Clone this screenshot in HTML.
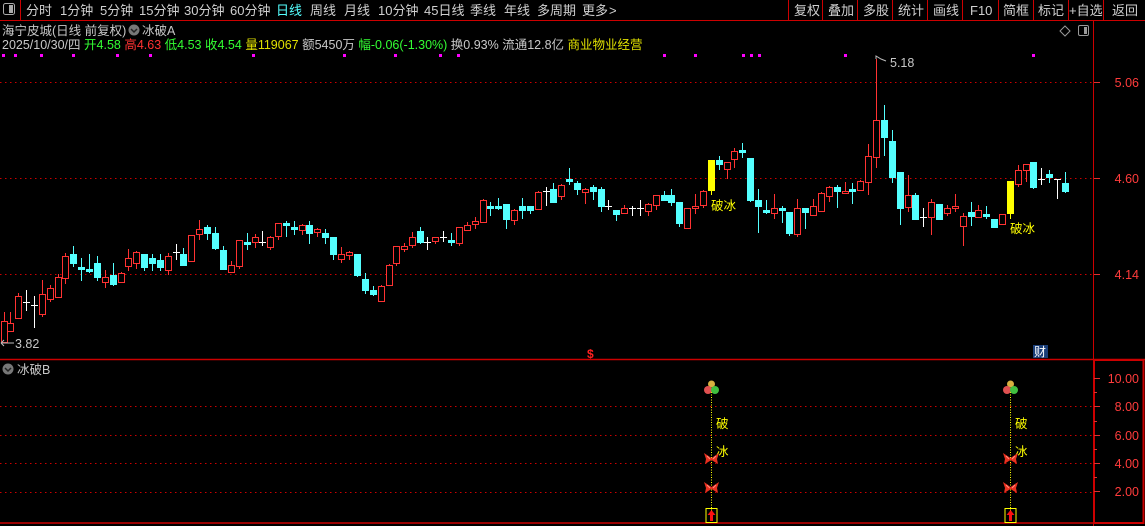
<!DOCTYPE html>
<html><head><meta charset="utf-8"><style>
html,body{margin:0;padding:0;background:#000;width:1145px;height:526px;overflow:hidden}
svg{display:block}
text{font-family:"Liberation Sans","Noto Sans CJK SC",sans-serif}
</style></head><body>
<svg id="s" width="1145" height="526" viewBox="0 0 1145 526" xmlns="http://www.w3.org/2000/svg">
<rect width="1145" height="526" fill="#000"/>
<rect x="3.5" y="3.5" width="11" height="11" rx="2" fill="none" stroke="#aaa"/>
<rect x="9" y="5" width="4" height="8" fill="#aaa"/>
<line x1="20.5" y1="0" x2="20.5" y2="20" stroke="#c00"/>
<g font-size="13" fill="#d0d0d0">
<text x="26" y="15">分时</text><text x="60" y="15">1分钟</text><text x="100" y="15">5分钟</text><text x="139" y="15">15分钟</text><text x="184" y="15">30分钟</text><text x="230" y="15">60分钟</text>
<text x="276" y="15" fill="#54ffff">日线</text><text x="310" y="15">周线</text><text x="344" y="15">月线</text><text x="378" y="15">10分钟</text><text x="424" y="15">45日线</text><text x="470" y="15">季线</text><text x="504" y="15">年线</text><text x="537" y="15">多周期</text><text x="582" y="15">更多</text><text x="609" y="15">&gt;</text>
<text x="794" y="15">复权</text><text x="828" y="15">叠加</text><text x="863" y="15">多股</text><text x="898" y="15">统计</text><text x="933" y="15">画线</text><text x="970" y="15">F10</text><text x="1003" y="15">简框</text><text x="1038" y="15">标记</text><text x="1069" y="15">+自选</text><text x="1112" y="15">返回</text>
</g>
<g stroke="#c00"><line x1="788.5" y1="0" x2="788.5" y2="20"/><line x1="822.5" y1="0" x2="822.5" y2="20"/><line x1="857.5" y1="0" x2="857.5" y2="20"/><line x1="892.5" y1="0" x2="892.5" y2="20"/><line x1="927.5" y1="0" x2="927.5" y2="20"/><line x1="962.5" y1="0" x2="962.5" y2="20"/><line x1="998.5" y1="0" x2="998.5" y2="20"/><line x1="1033.5" y1="0" x2="1033.5" y2="20"/><line x1="1068.5" y1="0" x2="1068.5" y2="20"/><line x1="1103.5" y1="0" x2="1103.5" y2="20"/></g>
<line x1="0" y1="20.5" x2="1145" y2="20.5" stroke="#c00"/>
<text x="2" y="35" font-size="12.5" fill="#c8c8c8">海宁皮城(日线 前复权)</text>
<circle cx="134" cy="30" r="5.5" fill="#777"/><path d="M131 29 l3 3 l3 -3" stroke="#222" fill="none" stroke-width="1.5"/>
<text x="142" y="35" font-size="12.5" fill="#c8c8c8">冰破A</text>
<text x="2" y="49" font-size="12.5" fill="#c8c8c8">2025/10/30/四 <tspan fill="#33ff33">开4.58</tspan> <tspan fill="#ff3232">高4.63</tspan> <tspan fill="#33ff33">低4.53</tspan> <tspan fill="#33ff33">收4.54</tspan> <tspan fill="#e0e000">量119067</tspan> 额5450万 <tspan fill="#33ff33">幅-0.06(-1.30%)</tspan> 换0.93% 流通12.8亿 <tspan fill="#e0e000">商业物业经营</tspan></text>
<path d="M1065 26 l5 5 l-5 5 l-5 -5z" fill="none" stroke="#999"/>
<rect x="1078.5" y="25.5" width="10" height="10" rx="1.5" fill="none" stroke="#999"/><rect x="1084" y="27" width="3" height="7" fill="#999"/>
<line x1="1093.5" y1="21" x2="1093.5" y2="526" stroke="#c00"/>
<line x1="0" y1="359.5" x2="1145" y2="359.5" stroke="#c00" stroke-width="1.5"/>
<rect x="1094" y="360" width="49.5" height="163" fill="none" stroke="#c00" stroke-width="2"/>
<line x1="0" y1="523" x2="1094" y2="523" stroke="#c00" stroke-width="1.5"/>
<g stroke="#c00" stroke-dasharray="1.5,3.5">
<line x1="0" y1="82.5" x2="1093" y2="82.5"/><line x1="0" y1="178.5" x2="1093" y2="178.5"/><line x1="0" y1="274.5" x2="1093" y2="274.5"/>
<line x1="0" y1="406.5" x2="1093" y2="406.5"/><line x1="0" y1="435.5" x2="1093" y2="435.5"/><line x1="0" y1="463.5" x2="1093" y2="463.5"/><line x1="0" y1="492.5" x2="1093" y2="492.5"/>
</g>
<g stroke="#e03030"><line x1="1094" y1="82.5" x2="1100" y2="82.5"/><line x1="1094" y1="178.5" x2="1100" y2="178.5"/><line x1="1094" y1="274.5" x2="1100" y2="274.5"/>
<line x1="1094" y1="378.5" x2="1100" y2="378.5"/><line x1="1094" y1="406.5" x2="1100" y2="406.5"/><line x1="1094" y1="435.5" x2="1100" y2="435.5"/><line x1="1094" y1="463.5" x2="1100" y2="463.5"/><line x1="1094" y1="491.5" x2="1100" y2="491.5"/>
<line x1="1094" y1="392.5" x2="1097" y2="392.5"/><line x1="1094" y1="421.5" x2="1097" y2="421.5"/><line x1="1094" y1="449.5" x2="1097" y2="449.5"/><line x1="1094" y1="477.5" x2="1097" y2="477.5"/></g>
<g font-size="12.5" fill="#ff3c3c" text-anchor="end">
<text x="1139" y="87">5.06</text><text x="1139" y="183">4.60</text><text x="1139" y="279">4.14</text>
<text x="1139" y="383">10.00</text><text x="1139" y="411">8.00</text><text x="1139" y="440">6.00</text><text x="1139" y="468">4.00</text><text x="1139" y="496">2.00</text>
</g>
<g id="c"></g>
<g id="m" fill="#ff00ff"></g>
<path d="M876 59 l0 -3 l5 3 l5 2" stroke="#bbb" fill="none"/><text x="890" y="67" font-size="12.5" fill="#c8c8c8">5.18</text>
<path d="M1 343 l13 0 M1 343 l3 -3 M1 343 l3 3" stroke="#bbb" fill="none"/><text x="15" y="348" font-size="12.5" fill="#c8c8c8">3.82</text>
<text x="711" y="210" font-size="12.5" fill="#ffff00">破冰</text>
<text x="1010" y="233" font-size="12.5" fill="#ffff00">破冰</text>
<text x="587" y="358" font-size="12" fill="#ff2020" font-weight="bold">$</text>
<rect x="1033" y="345" width="15" height="13" fill="#1a3e78"/><text x="1034" y="356" font-size="12" fill="#fff">财</text>
<circle cx="8" cy="369" r="5.5" fill="#777"/><path d="M5 368 l3 3 l3 -3" stroke="#222" fill="none" stroke-width="1.5"/>
<text x="17" y="374" font-size="12.5" fill="#c8c8c8">冰破B</text>
<g id="b"></g>
</svg>
<script>
var C=[[4,'r',321,342,312,342],[10,'r',323,331,312,331],[18,'r',296,318,293,318],[26,'w',302,302,290,311],[34,'w',305,305,296,328],[42,'r',294,314,280,317],[50,'r',288,299,285,302],[58,'r',277,297,274,297],[65,'r',256,278,253,284],[73,'c',254,263,246,267],[81,'c',267,269,258,281],[89,'c',269,271,254,273],[97,'c',263,277,256,281],[105,'r',277,282,270,288],[113,'c',275,284,263,286],[121,'r',273,282,272,282],[128,'r',258,266,249,271],[136,'r',252,263,251,269],[144,'c',254,267,254,271],[152,'c',258,263,254,271],[160,'c',260,267,254,271],[168,'r',256,270,253,275],[176,'w',252,252,244,260],[183,'c',254,265,248,265],[191,'r',235,261,235,261],[199,'r',229,234,220,240],[207,'c',227,233,225,240],[215,'c',233,248,227,250],[223,'c',250,269,246,269],[231,'r',265,272,261,273],[239,'r',240,266,240,269],[247,'c',242,244,233,250],[255,'r',237,242,234,248],[262,'w',242,242,231,246],[270,'r',237,247,236,250],[278,'r',223,236,223,240],[286,'c',223,225,221,237],[294,'c',227,229,221,235],[302,'r',225,230,224,235],[309,'c',225,233,221,244],[317,'r',229,232,228,237],[325,'c',233,237,229,244],[333,'c',237,254,237,260],[341,'r',254,259,247,263],[349,'r',252,255,251,260],[357,'c',254,275,254,277],[365,'c',279,290,273,294],[373,'c',290,294,286,296],[381,'r',286,301,285,302],[389,'r',265,285,264,286],[396,'r',246,263,246,266],[404,'r',246,249,243,252],[412,'r',237,245,232,248],[420,'c',231,242,227,244],[427,'w',242,242,237,250],[435,'r',237,241,237,244],[443,'w',237,237,231,242],[451,'c',240,242,233,246],[459,'r',227,243,227,246],[467,'r',225,230,222,230],[475,'r',221,224,217,229],[483,'r',200,222,199,222],[490,'c',206,208,202,216],[498,'c',206,208,198,210],[506,'c',204,219,204,229],[514,'r',210,220,209,225],[522,'c',206,210,198,219],[530,'c',206,210,206,214],[538,'r',192,209,191,209],[546,'w',191,191,187,206],[553,'c',189,202,183,202],[561,'r',185,196,184,200],[569,'c',179,181,168,185],[577,'c',183,189,181,195],[585,'r',189,192,188,204],[593,'c',187,191,185,200],[601,'c',189,206,187,212],[608,'w',206,206,200,210],[616,'c',210,214,210,221],[624,'r',208,213,205,214],[632,'w',208,208,206,216],[640,'w',208,208,200,216],[648,'r',204,211,203,216],[656,'r',195,205,195,210],[664,'c',195,200,191,200],[671,'c',195,202,189,206],[679,'c',202,223,202,227],[687,'r',208,228,208,228],[695,'r',206,208,194,214],[703,'r',191,205,190,208],[711,'y',160,190,160,195],[719,'c',160,164,156,170],[727,'r',162,169,162,179],[734,'r',151,159,148,168],[742,'c',150,152,143,158],[750,'c',158,200,158,202],[758,'c',200,206,189,233],[766,'c',210,212,200,214],[774,'r',208,213,194,219],[782,'c',208,210,206,223],[789,'c',212,233,212,236],[797,'r',208,234,199,237],[805,'c',208,212,208,229],[813,'r',206,215,199,215],[821,'r',193,211,192,211],[829,'r',187,196,186,202],[837,'c',187,191,185,208],[845,'r',191,193,182,193],[852,'c',189,191,183,204],[860,'r',181,190,180,191],[868,'r',156,182,144,195],[876,'r',120,157,59,168],[884,'c',120,137,105,156],[892,'c',141,177,130,183],[900,'c',172,208,172,225],[908,'r',195,207,175,212],[915,'c',195,219,193,220],[923,'w',217,217,208,227],[931,'r',202,217,199,235],[939,'c',204,219,204,220],[947,'r',208,213,205,216],[955,'r',206,208,194,212],[963,'r',216,226,213,246],[971,'c',212,216,202,226],[978,'r',210,217,205,217],[986,'c',214,216,206,219],[994,'c',219,227,219,227],[1002,'r',214,224,214,225],[1010,'y',181,213,181,219],[1018,'r',170,184,165,187],[1026,'r',164,170,164,182],[1033,'c',162,187,162,189],[1041,'w',179,179,168,185],[1049,'c',174,177,170,183],[1057,'w',179,179,179,199],[1065,'c',183,191,172,193]];
var g=document.getElementById('c'),h='';
var col={r:'#ff3232',c:'#54ffff',w:'#ffffff',y:'#ffff00'};
C.forEach(function(d){var x=d[0],t=d[1],a=d[2],b=d[3],hi=d[4],lo=d[5],k=col[t];
 h+='<line x1="'+(x+.5)+'" y1="'+hi+'" x2="'+(x+.5)+'" y2="'+Math.min(a,lo)+'" stroke="'+k+'"/>';
 h+='<line x1="'+(x+.5)+'" y1="'+b+'" x2="'+(x+.5)+'" y2="'+lo+'" stroke="'+k+'"/>';
 if(t=='w'||b-a<1){h+='<line x1="'+(x-3)+'" y1="'+(a+.5)+'" x2="'+(x+4)+'" y2="'+(a+.5)+'" stroke="'+k+'"/>';}
 else if(t=='r'){h+='<rect x="'+(x-2.5)+'" y="'+(a+.5)+'" width="6" height="'+(b-a)+'" fill="#000" stroke="'+k+'"/>';}
 else{h+='<rect x="'+(x-3)+'" y="'+a+'" width="7" height="'+(b-a+1)+'" fill="'+k+'"/>';}
});
g.innerHTML=h;
var M=[2,14,40,72,116,149,252,343,394,439,457,663,694,742,750,758,844,1032],mh='';
M.forEach(function(x){mh+='<rect x="'+x+'" y="54" width="3" height="3"/>';});
document.getElementById('m').innerHTML=mh;
var bh='';
[711,1010].forEach(function(x){
 bh+='<line x1="'+(x+.5)+'" y1="392" x2="'+(x+.5)+'" y2="512" stroke="#ffff00" stroke-dasharray="1,1.5"/>';
 bh+='<circle cx="'+(x+.5)+'" cy="384" r="3.5" fill="#d8b040"/><circle cx="'+(x-3)+'" cy="390" r="4" fill="#e05050"/><circle cx="'+(x+4)+'" cy="390" r="4" fill="#40c040"/>';
 bh+='<text x="'+(x+5)+'" y="428" font-size="12.5" fill="#ffff00">破</text><text x="'+(x+5)+'" y="456" font-size="12.5" fill="#ffff00">冰</text>';
 [459,488].forEach(function(y){bh+='<path d="M'+(x+.5)+' '+(y-1)+' L'+(x-7)+' '+(y-6)+' L'+(x-5)+' '+y+' L'+(x-6)+' '+(y+5)+' L'+(x+.5)+' '+(y+1)+' L'+(x+7)+' '+(y+5)+' L'+(x+6)+' '+y+' L'+(x+8)+' '+(y-6)+' z" fill="#e83020"/><path d="M'+(x-4)+' '+(y-3)+' l3 3 M'+(x+5)+' '+(y-3)+' l-3 3" stroke="#ff9080"/>';});
 bh+='<rect x="'+(x-5)+'" y="508.5" width="11" height="14" fill="none" stroke="#ffff00"/><path d="M'+(x+.5)+' 510 l-4 5 h2.5 v6 h3 v-6 h2.5 z" fill="#ff1010"/>';
});
document.getElementById('b').innerHTML=bh;
</script>
</body></html>
